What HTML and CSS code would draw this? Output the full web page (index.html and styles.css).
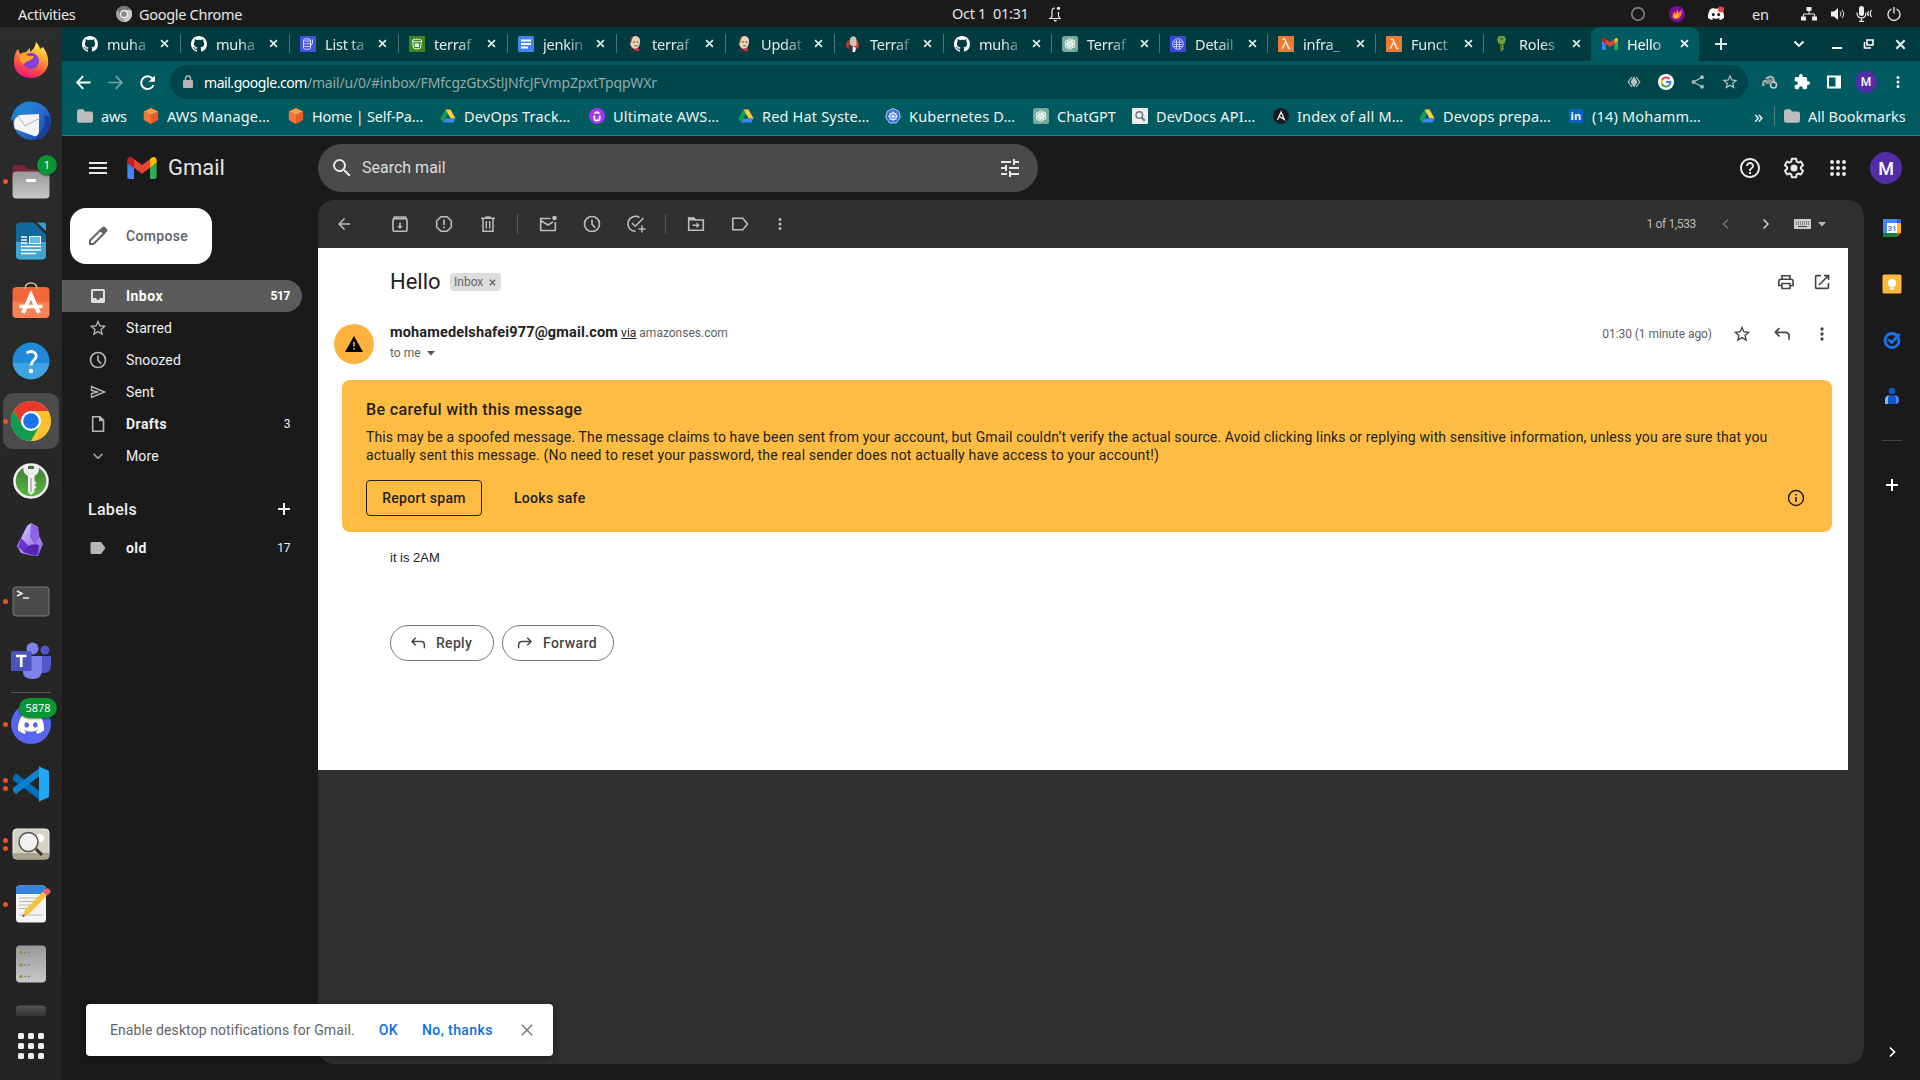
FILE: index.html
```html
<!DOCTYPE html>
<html lang="en">
<head>
<meta charset="utf-8">
<title>Hello - Gmail</title>
<link rel="stylesheet" href="styles.css">
</head>
<body>
<svg class="defs" width="0" height="0">
  <defs>
    <linearGradient id="g-fire" x1="0.7" y1="0" x2="0.3" y2="1"><stop offset="0" stop-color="#fff44f"/><stop offset=".4" stop-color="#ff9a2e"/><stop offset=".75" stop-color="#ff3f4e"/><stop offset="1" stop-color="#e31587"/></linearGradient>
    <linearGradient id="g-blue" x1="0" y1="0" x2="1" y2="1"><stop offset="0" stop-color="#2b9be8"/><stop offset="1" stop-color="#1f3fae"/></linearGradient>
    <linearGradient id="g-grey" x1="0" y1="0" x2="0" y2="1"><stop offset="0" stop-color="#999"/><stop offset="1" stop-color="#c8c8c8"/></linearGradient>
    <linearGradient id="g-orange" x1="0" y1="0" x2="0" y2="1"><stop offset=".5" stop-color="#f4673a"/><stop offset=".5" stop-color="#f88257"/></linearGradient>
    <linearGradient id="g-help" x1="0" y1="0" x2="0" y2="1"><stop offset=".55" stop-color="#2088d8"/><stop offset=".55" stop-color="#40a3e3"/></linearGradient>
    <linearGradient id="g-obs" x1="0" y1="0" x2="1" y2="1"><stop offset="0" stop-color="#dccbff"/><stop offset="1" stop-color="#8a5ff0"/></linearGradient>
    <linearGradient id="g-key" x1="0" y1="0" x2="0" y2="1"><stop offset="0" stop-color="#3c7d33"/><stop offset="1" stop-color="#5cb843"/></linearGradient>
    <linearGradient id="g-fade" x1="0" y1="0" x2="0" y2="1"><stop offset="0" stop-color="#555"/><stop offset="1" stop-color="#333"/></linearGradient>
    <symbol id="github" viewBox="0 0 16 16"><path fill="#fff" d="M8 0C3.58 0 0 3.58 0 8c0 3.54 2.29 6.53 5.47 7.59.4.07.55-.17.55-.38 0-.19-.01-.82-.01-1.49-2.01.37-2.53-.49-2.69-.94-.09-.23-.48-.94-.82-1.13-.28-.15-.68-.52-.01-.53.63-.01 1.08.58 1.23.82.72 1.21 1.87.87 2.33.66.07-.52.28-.87.51-1.07-1.78-.2-3.64-.89-3.64-3.95 0-.87.31-1.59.82-2.15-.08-.2-.36-1.02.08-2.12 0 0 .67-.21 2.2.82.64-.18 1.32-.27 2-.27s1.36.09 2 .27c1.53-1.04 2.2-.82 2.2-.82.44 1.1.16 1.92.08 2.12.51.56.82 1.27.82 2.15 0 3.07-1.87 3.75-3.65 3.95.29.25.54.73.54 1.48 0 1.07-.01 1.93-.01 2.2 0 .21.15.46.55.38A8.01 8.01 0 0 0 16 8c0-4.42-3.58-8-8-8z"/></symbol>
    <symbol id="dynamo" viewBox="0 0 16 16"><path fill="#4455dd" d="M0 0h16v16H0z"/><path fill="none" stroke="#e4e6ff" stroke-width=".9" d="M3.5 4v8c0 1.800 7 1.800 7 0V4M3.500 4c0-1.600 7-1.600 7 0s-7 1.600-7 0M3.500 6.700c0 1.600 7 1.600 7 0M3.500 9.400c0 1.600 7 1.600 7 0M12.500 3.500v3.500l-2 3"/></symbol>
    <symbol id="s3" viewBox="0 0 16 16"><path fill="#3f8624" d="M0 0h16v16H0z"/><path fill="none" stroke="#e9f7e2" stroke-width="1" d="M3.500 4.500l1 7.500c1.500 1.200 5.500 1.200 7 0l1-7.500M3.500 4.500c0-1.800 9-1.800 9 0s-9 1.800-9 0"/><path fill="#e9f7e2" d="M5.500 7.500h4.500v3.500H6z"/></symbol>
    <symbol id="gdoc" viewBox="0 0 16 16"><rect width="16" height="16" rx="1.500" fill="#4285f4"/><path stroke="#fff" stroke-width="2" d="M3 4.500h10M3 8h10M3 11.500h7"/></symbol>
    <symbol id="jenkins" viewBox="0 0 16 16"><path fill="#30333b" d="M2 16c0-4 2.500-6 5-6s6 2 6.500 6z"/><path fill="#efd2b2" d="M3 6c0-4 2-6 5-6s5.500 2 5 6c-.4 4-2 7-4.500 7S3 10.500 3 6z"/><path fill="#55402f" d="M3 6C2 2 5-.5 8 0 5 1 4.500 4 4 8z"/><path stroke="#333" d="M6 6h1.800M9.500 6h1.800"/><path stroke="#8a5b4b" d="M7 9.800h3.500"/><path fill="#d33833" d="M7 13l4-1.200 1.500 3H8.500z"/></symbol>
    <symbol id="redhat" viewBox="0 0 16 16"><path fill="#c33" d="M1 9c0-4 4-6 7-6s6 2 6 6-2 4-6 4-7 0-7-4z"/><path fill="#cfc3b8" d="M5 4c0-5 6.500-5 6.500 0v6H5z"/><path fill="#393c44" d="M3.500 8l4 2v5l-4-3z"/><path fill="#fff" d="M8 10l3 2-1 4H7.500z"/></symbol>
    <symbol id="gpt" viewBox="0 0 16 16"><rect width="16" height="16" rx="2.500" fill="#74aa9c"/><g fill="none" stroke="#fff" stroke-width=".9"><path id="kn" d="M5.400 9.300V5.200a2.400 2.400 0 0 1 4.400-1.300M7 7.300l3.600-2"/><use href="#kn" transform="rotate(60 8 8)"/><use href="#kn" transform="rotate(120 8 8)"/><use href="#kn" transform="rotate(180 8 8)"/><use href="#kn" transform="rotate(240 8 8)"/><use href="#kn" transform="rotate(300 8 8)"/></g></symbol>
    <symbol id="aws" viewBox="0 0 16 16"><path fill="#3d48d8" d="M0 0h16v16H0z"/><g fill="none" stroke="#dfe1ff" stroke-width=".8"><circle cx="8" cy="8" r="5.300"/><path d="M4 6h8M4 8.500h8M6.500 4v9M9.500 4v9M4 10.500h8"/></g></symbol>
    <symbol id="lambda" viewBox="0 0 16 16"><path fill="#ed7a30" d="M0 0h16v16H0z"/><path fill="none" stroke="#ffe9d8" stroke-width="1.500" d="M4.500 3.200h2.300l4 9.200h1.700M7.400 6.500l-3.200 6.200"/></symbol>
    <symbol id="key" viewBox="0 0 16 16"><path fill="#759c3e" d="M3 3l2-3h5l2 3-1 4-2 1v1l1 1-1 1.500 1 1-2.500 3.500L6 14V8L4 7z"/><path fill="#3f6b2b" d="M7 8h1v7.500L6 14V8zM6.500 2h2.500v2H6.500z"/></symbol>
    <symbol id="gmail" viewBox="52 42 88 66"><path fill="#4285f4" d="M58 108h14V74L52 59v43c0 3.320 2.690 6 6 6"/><path fill="#34a853" d="M120 108h14c3.320 0 6-2.690 6-6V59l-20 15"/><path fill="#fbbc04" d="M120 48v26l20-15v-8c0-7.420-8.470-11.650-14.400-7.200"/><path fill="#ea4335" d="M72 74V48l24 18 24-18v26L96 92"/><path fill="#c5221f" d="M52 51v8l20 15V48l-5.600-4.200c-5.940-4.450-14.400-.22-14.400 7.200"/></symbol>
    <symbol id="x" viewBox="0 0 10 10"><path stroke="currentColor" stroke-width="1.900" d="M1.200 1.200l7.600 7.600M8.800 1.200L1.200 8.800"/></symbol>
    <symbol id="folder" viewBox="0 0 14 14"><path fill="#bdbdbd" d="M0 3q0-2 2-2h3.500l1.500 2H12q2 0 2 2v6q0 2-2 2H2q-2 0-2-2z"/></symbol>
    <symbol id="cube" viewBox="0 0 16 16"><path fill="#ff9a45" d="M8 0l7.200 3.500L8 7 .8 3.500z"/><path fill="#f7763a" d="M.8 3.500L8 7v9L.8 12z"/><path fill="#e8592b" d="M15.200 3.500L8 7v9l7.200-4z"/></symbol>
    <symbol id="drive" viewBox="0 0 16 16"><path fill="#0f9d58" d="M5.500 1.500L8 6 3 14.500.3 10.500z"/><path fill="#ffcd40" d="M5.500 1.500h5l5.200 9h-5z"/><path fill="#4285f4" d="M3 14.500l2.500-4h10.200l-2.500 4z"/></symbol>
    <symbol id="udemy" viewBox="0 0 16 16"><circle cx="8" cy="8" r="8" fill="#a435f0"/><path fill="none" stroke="#fff" stroke-width="1.800" d="M5.300 7.500v2.500a2.700 2.700 0 0 0 5.400 0V7.500M5.500 5.500L8 4l2.500 1.500"/></symbol>
    <symbol id="k8s" viewBox="0 0 16 16"><path fill="#326ce5" stroke="#fff" stroke-width=".7" d="M8 .5l5.800 2.800 1.500 6.300-4 5.400H4.700l-4-5.400 1.500-6.300z"/><circle cx="8" cy="8.300" r="3.600" fill="none" stroke="#fff"/><path stroke="#fff" stroke-width=".8" d="M8 3v10.500M3 8.300h10M4.500 4.800l7 7M11.500 4.800l-7 7"/></symbol>
    <symbol id="devdocs" viewBox="0 0 16 16"><rect width="16" height="16" rx="1" fill="#eee"/><circle cx="7.300" cy="7" r="3.300" fill="none" stroke="#777" stroke-width="1.500"/><path stroke="#777" stroke-width="2" d="M9.800 9.800l3 3"/></symbol>
    <symbol id="ansible" viewBox="0 0 16 16"><circle cx="8" cy="8" r="8" fill="#1a1a22"/><path fill="none" stroke="#fff" stroke-width="1.200" d="M4.500 12L8 4l3.300 7.500L6.500 8.500"/></symbol>
    <symbol id="dots" viewBox="0 0 24 24"><path fill="currentColor" d="M12 8a2 2 0 1 0 0-4 2 2 0 0 0 0 4zm0 2a2 2 0 1 0 0 4 2 2 0 0 0 0-4zm0 6a2 2 0 1 0 0 4 2 2 0 0 0 0-4z"/></symbol>
    <symbol id="star" viewBox="0 0 24 24"><path fill="currentColor" d="M22 9.240l-7.190-.62L12 2 9.190 8.630 2 9.240l5.460 4.730L5.820 21 12 17.270 18.180 21l-1.630-7.030L22 9.240zM12 15.400l-3.760 2.270 1-4.280-3.320-2.880 4.380-.38L12 6.100l1.710 4.040 4.380.38-3.320 2.880 1 4.280L12 15.400z"/></symbol>
    <symbol id="clock" viewBox="0 0 24 24"><g fill="none" stroke="currentColor" stroke-width="2"><circle cx="12" cy="12" r="9"/><path d="M12 6.500V12.500l4 4"/></g></symbol>
    <symbol id="grid" viewBox="0 0 18 18"><g fill="currentColor"><circle cx="3" cy="3" r="2"/><circle cx="9" cy="3" r="2"/><circle cx="15" cy="3" r="2"/><circle cx="3" cy="9" r="2"/><circle cx="9" cy="9" r="2"/><circle cx="15" cy="9" r="2"/><circle cx="3" cy="15" r="2"/><circle cx="9" cy="15" r="2"/><circle cx="15" cy="15" r="2"/></g></symbol>
    <symbol id="back" viewBox="0 0 24 24"><path fill="currentColor" d="M20 11H7.830l5.590-5.590L12 4l-8 8 8 8 1.410-1.410L7.830 13H20v-2z"/></symbol>
    <symbol id="reply" viewBox="0 0 24 24"><path fill="none" stroke="currentColor" stroke-width="2" d="M9 5L4 10l5 5M4.500 10H16q4.500 0 4.500 4.500V19"/></symbol>
    <symbol id="plus" viewBox="0 0 14 14"><path stroke="currentColor" stroke-width="2" d="M7 1v12M1 7h12"/></symbol>
    <symbol id="discord" viewBox="0 0 24 24"><path fill="#fff" d="M20.317 4.370a19.790 19.790 0 0 0-4.885-1.515.074.074 0 0 0-.079.037c-.21.375-.444.864-.608 1.250a18.270 18.270 0 0 0-5.487 0 12.640 12.640 0 0 0-.617-1.250.077.077 0 0 0-.079-.037A19.736 19.736 0 0 0 3.677 4.370a.07.07 0 0 0-.032.027C.533 9.046-.32 13.580.099 18.057a.082.082 0 0 0 .031.057 19.900 19.900 0 0 0 5.993 3.030.078.078 0 0 0 .084-.028 14.090 14.090 0 0 0 1.226-1.994.076.076 0 0 0-.041-.106 13.107 13.107 0 0 1-1.872-.892.077.077 0 0 1-.008-.128 10.200 10.200 0 0 0 .372-.292.074.074 0 0 1 .077-.010c3.928 1.793 8.180 1.793 12.062 0a.074.074 0 0 1 .078.010c.12.098.246.198.373.292a.077.077 0 0 1-.006.127 12.299 12.299 0 0 1-1.873.892.077.077 0 0 0-.041.107c.36.698.772 1.362 1.225 1.993a.076.076 0 0 0 .084.028 19.839 19.839 0 0 0 6.002-3.030.077.077 0 0 0 .032-.054c.5-5.177-.838-9.674-3.549-13.660a.061.061 0 0 0-.031-.030zM8.020 15.330c-1.183 0-2.157-1.085-2.157-2.419 0-1.333.956-2.419 2.157-2.419 1.210 0 2.176 1.096 2.157 2.420 0 1.333-.956 2.418-2.157 2.418zm7.975 0c-1.183 0-2.157-1.085-2.157-2.419 0-1.333.955-2.419 2.157-2.419 1.210 0 2.176 1.096 2.157 2.420 0 1.333-.946 2.418-2.157 2.418z"/></symbol>
  </defs>
</svg>

<header class="topbar">
  <div class="tb-left">
    <span class="t-act">Activities</span>
    <svg class="t-app" width="16" height="16" viewBox="0 0 16 16"><circle cx="8" cy="8" r="8" fill="#a5a5a5"/><path fill="#777" d="M8 4h7A8 8 0 0 0 1.500 3.500L4.500 9z"/><path fill="#ccc" d="M8 16a8 8 0 0 0 7-12H9z"/><circle cx="8" cy="8" r="3.500" fill="#888" stroke="#f2f2f2" stroke-width="1.300"/></svg>
    <span>Google Chrome</span>
  </div>
  <div class="tb-mid"><span>Oct 1&nbsp; 01:31</span>
    <svg width="14" height="16" viewBox="0 0 14 16"><path fill="none" stroke="#eee" stroke-width="1.200" d="M1 12.500h12M3 12l1-2V5.500Q4 2 7 2M10.500 6v4l1 2"/><circle cx="10.500" cy="2.300" r="1.600" fill="#eee"/><path fill="#eee" d="M5.500 14h3.500q-.5 1.500-1.750 1.500T5.500 14z"/></svg>
  </div>
  <div class="tb-right">
    <svg class="r1" width="16" height="16" viewBox="0 0 16 16"><circle cx="8" cy="8" r="6.200" fill="none" stroke="#777" stroke-width="1.900"/></svg>
    <svg class="r2" width="16" height="16" viewBox="0 0 16 16"><circle cx="8" cy="8" r="8" fill="#7d0b9c"/><path fill="#ff7a2a" d="M3.500 11q0-4 2.500-6v3l3-5v4l4-3q0 8-5 9-4 .5-4.500-2z"/><path fill="#ffd23a" d="M5 11q1-3 2-3v1.500L9 7q1 4-2 5z"/></svg>
    <svg class="r3" width="16" height="16" viewBox="0 0 16 16"><use href="#discord" width="16" height="16"/><circle cx="13" cy="3.500" r="3" fill="#e5484d"/></svg>
    <span class="r4">en</span>
    <svg class="r5" width="16" height="14" viewBox="0 0 16 14"><path fill="#eee" d="M5.500 0h5v4h-5zM0 9.500h5v4H0zM11 9.500h5v4h-5z"/><path fill="none" stroke="#eee" d="M8 4v3M2.500 10V7h11v3"/></svg>
    <svg class="r6" width="16" height="16" viewBox="0 0 16 16"><path fill="#eee" d="M1 5.500h3L8 2v12l-4-3.500H1z"/><path fill="none" stroke="#ddd" d="M10 5.500q2 2.500 0 5M12 4q3.300 4 0 8"/></svg>
    <svg class="r7" width="17" height="16" viewBox="0 0 17 16"><rect x="3" y="0" width="5" height="10" rx="2.500" fill="#eee"/><path fill="none" stroke="#eee" stroke-width="1.200" d="M1 6.500Q1 12 5.500 12T10 6.500M5.500 12v3.500M3 15.300h5M12.500 5q-1.500 2.500 0 5M15.500 4q-2.500 3.500 0 7"/></svg>
    <svg class="r8" width="14" height="14" viewBox="0 0 14 14"><path fill="none" stroke="#eee" stroke-width="1.300" d="M4.500 2A6 6 0 1 0 9.500 2M7 0v6.500"/></svg>
  </div>
</header>

<div class="desktop">
  <nav class="dock">
    <div class="app"><svg viewBox="0 0 40 40"><path fill="url(#g-fire)" d="M3 22C3 15 4 12 7 8l2 5q3-2 6-2l4-4v4c3-2 5-5 6-10 3 3 4 6 4 7l3-2c4 6 6 11 5 18-1.500 7-8 13-17 13S3 31 3 22z"/><circle cx="20" cy="20" r="8" fill="#8040d8"/><path fill="#ff9f2c" d="M8 14q6-3 9 1h6q-1 4-6 5-3 1-4 3-5-2-5-9z"/></svg></div>
    <div class="app"><svg viewBox="0 0 40 40"><circle cx="21" cy="20" r="19" fill="url(#g-blue)"/><path fill="#1f7fd0" d="M0 20Q1 6 14 1q8-2 14 3-10 1-13 9L5 17z"/><path fill="#1c3f9c" d="M33 14q4 12-8 22l4 3q12-7 10-23z"/><path fill="#f3f3f5" d="M4 18l4-4 20-1v18q-1 5-5 4L4 28q-2-5 0-10z"/><path fill="none" stroke="#aaa" stroke-width=".9" d="M7 15l7 10 15-8"/></svg></div>
    <div class="app"><i class="dot"></i><svg viewBox="0 0 40 40"><path fill="#7d2438" d="M1.500 8q0-4 4-4H13l4 4h17q4 0 4 4v8H1.500z"/><rect x="1.500" y="10.500" width="37" height="27" rx="4" fill="url(#g-grey)"/><rect x="15" y="18" width="10" height="3" rx="1" fill="#fff"/></svg><b class="badge one">1</b></div>
    <div class="app"><svg viewBox="0 0 40 40"><path fill="#106a9b" d="M9 1.500h14L35 14v20q0 4.500-4 4.500H9q-4 0-4-4V5.500q0-4 4-4z"/><path fill="#3fa4d2" d="M5 21h30v13q0 4.500-4 4.500H9q-4 0-4-4z"/><path fill="#2d9fd0" d="M26 1.500h7q2 0 2 2V10z"/><path stroke="#fff" stroke-width="1.600" d="M10 16h6M10 19h6M10 22h6M10 25.500h20M10 29h20M10 32.500h15"/><rect x="18.500" y="15.500" width="11" height="7" fill="#5bc0f0" stroke="#fff"/></svg></div>
    <div class="app"><svg viewBox="0 0 40 40"><rect x="1.500" y="6" width="37" height="31" rx="4" fill="url(#g-orange)"/><path fill="none" stroke="#d7b98d" stroke-width="1.500" d="M14 8q0-6 6-6t6 6"/><path fill="none" stroke="#fff" stroke-width="4" d="M12 32l8-18 8 18"/><path stroke="#fff" stroke-width="3.500" d="M8.500 25.500h23"/></svg></div>
    <div class="app"><svg viewBox="0 0 40 40"><circle cx="20" cy="20" r="18.500" fill="url(#g-help)"/><path fill="none" stroke="#fff" stroke-width="2.800" d="M15.500 12q5-3 8.500 0 3 4-1.500 7.500-2.500 2-2.500 5"/><circle cx="20" cy="30" r="2.200" fill="#fff"/></svg></div>
    <div class="app on"><i class="dot"></i><svg viewBox="0 0 40 40"><circle cx="20" cy="20" r="20" fill="#fbc02d"/><path fill="#e33b2e" d="M20 10h17.300A20 20 0 0 0 2.700 10l8.700 15z"/><path fill="#0f9d50" d="M2.700 10A20 20 0 0 0 20 40l8.600-15-17.200 0z"/><path fill="#fbc02d" d="M20 40l8.700-15Q31 20 28.700 15L37 10A20 20 0 0 1 20 40z"/><path fill="#fbc02d" d="M20 10h17.300l-6 10z"/><circle cx="20" cy="20" r="10" fill="#fff"/><circle cx="20" cy="20" r="7.800" fill="#1a73e8"/></svg></div>
    <div class="app"><svg viewBox="0 0 40 40"><circle cx="20" cy="20" r="16.500" fill="url(#g-key)" stroke="#f0f0f0" stroke-width="2.500"/><path fill="#f0f0f0" d="M12.500 5h15q2 7-4 10v5l2 2-2 2 2 2-2 2v3l-3.500 3-3-3V15q-6-3-4.500-10z"/><path fill="#397832" d="M17 5h6v3h-6z"/><path stroke="#999" stroke-width="1.200" d="M20 17v14"/></svg></div>
    <div class="app"><svg viewBox="0 0 40 40"><path fill="url(#g-obs)" d="M16 5l4-3 7 4 1 9 4 8-5 12-5 0-12-3-4-7 4-8z"/><path fill="#6a35cf" d="M10 17l7 7-3 8-7-6z"/><path fill="#8d63ea" d="M20 2l7 5 1 9-4 8-5-8z"/><path fill="#5426ad" d="M12 31q5-10 16-7l-1 9-3 2z"/></svg></div>
    <div class="app"><i class="dot"></i><svg viewBox="0 0 40 40"><rect x="2" y="6" width="36" height="29" rx="3" fill="#4a4a4a" stroke="#777"/><path fill="none" stroke="#eee" stroke-width="1.500" d="M6 10l5 2.500L6 15M12 17h6"/></svg></div>
    <div class="app"><svg viewBox="0 0 40 40"><circle cx="34" cy="9" r="4.500" fill="#5059c9"/><circle cx="21.500" cy="7.500" r="6" fill="#7b83eb"/><path fill="#5059c9" d="M28 15h12v9q0 7-6 8h-6z"/><path fill="#7b83eb" d="M12 15h19v14q0 9-9.500 9T12 31z"/><rect x="0" y="10" width="20.500" height="20" rx="1.500" fill="#4b53bc"/><path stroke="#fff" stroke-width="2.600" d="M5 15h10.500M10.200 15v11"/></svg></div>
    <div class="dock-sep"></div>
    <div class="app"><i class="dot"></i><svg viewBox="0 0 40 40"><circle cx="20" cy="20" r="20" fill="#5865f2"/><use href="#discord" x="7" y="7" width="26" height="26"/></svg><b class="badge">5878</b></div>
    <div class="app"><i class="dot two"></i><svg viewBox="0 0 40 40"><path fill="#0070b8" d="M2 13l3-3.500L30 28v9L2 16z"/><path fill="#0a84cf" d="M2 27l3 3L30 11V3L2 24z"/><path fill="#23a7f2" d="M28 2.500l10 4.500v26l-10 4.500z"/></svg></div>
    <div class="app"><i class="dot two"></i><svg viewBox="0 0 40 40"><rect x="2" y="5" width="36" height="30" rx="3.500" fill="#d6d2c6" stroke="#eee"/><path fill="#a9a38f" d="M2 29h36v3q0 3-3 3H5q-3 0-3-3z"/><circle cx="29" cy="14" r="4" fill="#fff"/><circle cx="17.500" cy="18" r="9.500" fill="#f2f2f0" stroke="#555" stroke-width="1.500"/><path stroke="#333" stroke-width="3" d="M25 25l6 6"/></svg></div>
    <div class="app"><i class="dot"></i><svg viewBox="0 0 40 40"><rect x="5" y="1.500" width="30" height="37" rx="3.500" fill="#f4f4f4"/><path fill="#3584e4" d="M5 10V5q0-3.500 3.500-3.500h23Q35 1.500 35 5v5z"/><path stroke="#bbb5a8" stroke-width="1.200" d="M8 14h20M8 17.500h17M8 21h14M8 24.500h12M8 31h24"/><path fill="#f8c33c" d="M14 26L32 7.500l4 4L18 30l-6 2.500z"/><path fill="#ee5f6b" d="M33 6q3-3 5.500-.5T38 10l-2 1.500L31.500 7z"/><path fill="#333" d="M12.500 30.500l-1 2.500 2.500-1z"/></svg></div>
    <div class="app"><svg viewBox="0 0 40 40"><rect x="5" y="1.500" width="30" height="37" rx="4" fill="url(#g-grey)"/><g fill="#78a93c"><circle cx="10" cy="8.500" r="1.800"/><circle cx="10" cy="21" r="1.800"/><circle cx="10" cy="32.500" r="1.800"/></g><path stroke="#777" stroke-width="1.600" stroke-dasharray="1.600 1.800" d="M13.500 8.500h5M13.500 21h5M13.500 32.500h5"/></svg></div>
    <div class="cut"><svg viewBox="0 0 40 11"><path fill="url(#g-fade)" d="M5 11V4q0-3.500 3.500-3.500h23Q35 .500 35 4v7z"/></svg></div>
    <div class="all"><svg viewBox="0 0 26 26"><g fill="#eee"><rect width="6" height="6" rx="1.500"/><rect x="10" width="6" height="6" rx="1.500"/><rect x="20" width="6" height="6" rx="1.500"/><rect y="10" width="6" height="6" rx="1.500"/><rect x="10" y="10" width="6" height="6" rx="1.500"/><rect x="20" y="10" width="6" height="6" rx="1.500"/><rect y="20" width="6" height="6" rx="1.500"/><rect x="10" y="20" width="6" height="6" rx="1.500"/><rect x="20" y="20" width="6" height="6" rx="1.500"/></g></svg></div>
  </nav>

  <div class="browser">
    <div class="tabs">
      <div class="tab wide"><svg class="fav"><use href="#github"/></svg><span>muha</span><svg class="close"><use href="#x"/></svg></div>
      <div class="tab wide"><svg class="fav"><use href="#github"/></svg><span>muha</span><svg class="close"><use href="#x"/></svg></div>
      <div class="tab wide"><svg class="fav"><use href="#dynamo"/></svg><span>List ta</span><svg class="close"><use href="#x"/></svg></div>
      <div class="tab wide"><svg class="fav"><use href="#s3"/></svg><span>terraf</span><svg class="close"><use href="#x"/></svg></div>
      <div class="tab wide"><svg class="fav"><use href="#gdoc"/></svg><span>jenkin</span><svg class="close"><use href="#x"/></svg></div>
      <div class="tab wide"><svg class="fav"><use href="#jenkins"/></svg><span>terraf</span><svg class="close"><use href="#x"/></svg></div>
      <div class="tab wide"><svg class="fav"><use href="#jenkins"/></svg><span>Updat</span><svg class="close"><use href="#x"/></svg></div>
      <div class="tab wide"><svg class="fav"><use href="#redhat"/></svg><span>Terraf</span><svg class="close"><use href="#x"/></svg></div>
      <div class="tab"><svg class="fav"><use href="#github"/></svg><span>muha</span><svg class="close"><use href="#x"/></svg></div>
      <div class="tab"><svg class="fav"><use href="#gpt"/></svg><span>Terraf</span><svg class="close"><use href="#x"/></svg></div>
      <div class="tab"><svg class="fav"><use href="#aws"/></svg><span>Detail</span><svg class="close"><use href="#x"/></svg></div>
      <div class="tab"><svg class="fav"><use href="#lambda"/></svg><span>infra_</span><svg class="close"><use href="#x"/></svg></div>
      <div class="tab"><svg class="fav"><use href="#lambda"/></svg><span>Funct</span><svg class="close"><use href="#x"/></svg></div>
      <div class="tab last"><svg class="fav"><use href="#key"/></svg><span>Roles</span><svg class="close"><use href="#x"/></svg></div>
      <div class="tab active"><svg class="fav"><use href="#gmail"/></svg><span>Hello</span><svg class="close"><use href="#x"/></svg></div>
      <svg class="newtab"><use href="#plus"/></svg>
      <div class="winctl">
        <svg width="12" height="8" viewBox="0 0 12 8"><path fill="none" stroke="#fff" stroke-width="1.800" d="M1.500 1.500L6 6l4.500-4.500"/></svg>
        <svg width="12" height="10" viewBox="0 0 12 10"><path fill="#fff" d="M1 8h10v2H1z"/></svg>
        <svg width="12" height="10" viewBox="0 0 12 10"><path fill="none" stroke="#fff" stroke-width="1.600" d="M4 1h6v5H4zM1.500 3v6H8"/></svg>
        <svg width="11" height="11"><use href="#x"/></svg>
      </div>
    </div>
    <div class="toolbar">
      <svg class="nav" viewBox="0 0 24 24"><path fill="none" stroke="#fff" stroke-width="2.600" d="M22 12H3M11.500 3L3 12l8.500 9"/></svg>
      <svg class="nav dim" viewBox="0 0 24 24"><path fill="none" stroke="#fff" stroke-width="2.300" d="M2 12h19M12.500 3l8.500 9-8.500 9"/></svg>
      <svg class="nav" viewBox="0 0 24 24"><path fill="none" stroke="#fff" stroke-width="2.700" d="M20.500 15.500A9 9 0 1 1 19 6.500l1 1.500"/><path fill="#fff" d="M22.500 2v9h-9z"/></svg>
      <div class="url">
        <svg width="10" height="14" viewBox="0 0 10 14"><rect x="0" y="5" width="10" height="8" rx="1" fill="#b5b5b5"/><path fill="none" stroke="#b5b5b5" stroke-width="1.500" d="M2.500 5.500V3.500a2.500 2.500 0 0 1 5 0v2"/></svg>
        <span class="addr"><em>mail.google.com</em>/mail/u/0/#inbox/FMfcgzGtxStlJNfcJFVmpZpxtTpqpWXr</span>
        <div class="urlicons">
          <svg viewBox="0 0 16 16"><path fill="#b9c4c5" d="M8 2.500l3.500 5.500L8 13.500 4.500 8z"/><path fill="none" stroke="#b9c4c5" stroke-width="1.200" d="M6 3L2.200 8 6 13M10 3l3.800 5L10 13"/></svg>
          <svg viewBox="0 0 16 16"><circle cx="8" cy="8" r="8" fill="#fff"/><g fill="none" stroke-width="2"><path stroke="#ea4335" d="M4 6A4.500 4.500 0 0 1 11.500 5"/><path stroke="#fbbc04" d="M4 6a4.500 4.500 0 0 0 0 4"/><path stroke="#34a853" d="M4 10a4.500 4.500 0 0 0 7 1.500"/><path stroke="#4285f4" d="M8 8h4.500q0 2-1.500 3.500"/></g></svg>
          <svg viewBox="0 0 16 16"><g fill="#a9b7b8"><circle cx="12" cy="3.200" r="2"/><circle cx="12" cy="12.800" r="2"/><circle cx="3.500" cy="8" r="2"/></g><path fill="none" stroke="#a9b7b8" stroke-width="1.300" d="M12 3.200L3.500 8l8.500 4.800"/></svg>
          <svg class="ustar"><use href="#star"/></svg>
        </div>
      </div>
      <div class="exts">
        <svg viewBox="0 0 16 16"><path fill="none" stroke="#a5adae" stroke-width="2.400" d="M1.500 12q-1-6 3-5l1 3M4 5q4-4 7-1l1 4"/><circle cx="11.500" cy="11" r="3" fill="none" stroke="#ccc" stroke-width="1.600"/><circle cx="7.500" cy="7.500" r="2.500" fill="#8d9495"/></svg>
        <svg viewBox="1 1 22 22"><path fill="#fff" d="M20.500 11H19V7c0-1.100-.9-2-2-2h-4V3.500a2.500 2.500 0 0 0-5 0V5H4c-1.100 0-1.990.9-1.990 2v3.800H3.500c1.490 0 2.700 1.210 2.700 2.700s-1.210 2.700-2.700 2.700H2V20c0 1.100.9 2 2 2h3.800v-1.500c0-1.490 1.210-2.700 2.700-2.700 1.490 0 2.700 1.210 2.700 2.700V22H17c1.100 0 2-.9 2-2v-4h1.500a2.500 2.500 0 0 0 0-5z"/></svg>
        <svg viewBox="0 0 16 16"><path fill="#fff" fill-rule="evenodd" d="M1 1.500h14v13H1zM3 3.500v9h6.500v-9z"/></svg>
        <b class="me">M</b>
        <svg class="kebab"><use href="#dots"/></svg>
      </div>
    </div>
    <div class="bookmarks">
      <div class="bm tight"><svg><use href="#folder"/></svg><span>aws</span></div>
      <div class="bm"><svg><use href="#cube"/></svg><span>AWS Manage…</span></div>
      <div class="bm tight"><svg><use href="#cube"/></svg><span>Home | Self-Pa…</span></div>
      <div class="bm"><svg><use href="#drive"/></svg><span>DevOps Track…</span></div>
      <div class="bm"><svg><use href="#udemy"/></svg><span>Ultimate AWS…</span></div>
      <div class="bm"><svg><use href="#drive"/></svg><span>Red Hat Syste…</span></div>
      <div class="bm"><svg><use href="#k8s"/></svg><span>Kubernetes D…</span></div>
      <div class="bm mid"><svg><use href="#gpt"/></svg><span>ChatGPT</span></div>
      <div class="bm"><svg><use href="#devdocs"/></svg><span>DevDocs API…</span></div>
      <div class="bm"><svg><use href="#ansible"/></svg><span>Index of all M…</span></div>
      <div class="bm"><svg><use href="#drive"/></svg><span>Devops prepa…</span></div>
      <div class="bm"><b class="li">in</b><span>(14) Mohamm…</span></div>
      <div class="bm-more">»</div>
      <div class="bm mid all-bm"><svg><use href="#folder"/></svg><span>All Bookmarks</span></div>
    </div>

    <div class="gmail">
      <div class="ghead">
        <svg class="burger" width="18" height="12" viewBox="0 0 18 12"><path fill="#e8e8e8" d="M0 0h18v2H0zM0 5h18v2H0zM0 10h18v2H0z"/></svg>
        <svg class="glogo" width="30" height="22"><use href="#gmail"/></svg>
        <span class="gname">Gmail</span>
        <div class="search">
          <svg width="24" height="24" viewBox="0 0 24 24"><path fill="#e8e8e8" d="M15.500 14h-.79l-.28-.27A6.471 6.471 0 0 0 16 9.500 6.500 6.500 0 1 0 9.500 16c1.610 0 3.090-.59 4.230-1.570l.27.28v.79l5 4.990L20.490 19l-4.990-5zm-6 0C7.010 14 5 11.990 5 9.500S7.010 5 9.500 5 14 7.010 14 9.500 11.990 14 9.500 14z"/></svg>
          <span>Search mail</span>
          <svg class="tune" width="24" height="24" viewBox="0 0 24 24"><path fill="#e8e8e8" d="M3 17v2h6v-2H3zM3 5v2h10V5H3zm10 16v-2h8v-2h-8v-2h-2v6h2zM7 9v2H3v2h4v2h2V9H7zm14 4v-2H11v2h10zm-6-4h2V7h4V5h-4V3h-2v6z"/></svg>
        </div>
        <div class="hicons">
          <svg viewBox="0 0 24 24"><path fill="#e8e8e8" d="M11 18h2v-2h-2v2zm1-16C6.480 2 2 6.480 2 12s4.480 10 10 10 10-4.480 10-10S17.520 2 12 2zm0 18c-4.410 0-8-3.590-8-8s3.590-8 8-8 8 3.590 8 8-3.590 8-8 8zm0-14c-2.210 0-4 1.790-4 4h2c0-1.100.9-2 2-2s2 .9 2 2c0 2-3 1.750-3 5h2c0-2.250 3-2.500 3-5 0-2.210-1.790-4-4-4z"/></svg>
          <svg viewBox="0 0 24 24"><path fill="#e8e8e8" d="M13.850 22.250h-3.700c-.74 0-1.360-.54-1.450-1.270l-.27-1.890c-.27-.14-.53-.29-.79-.46l-1.800.72c-.7.26-1.470-.03-1.810-.65L2.200 15.530c-.35-.66-.2-1.440.36-1.880l1.530-1.190c-.01-.15-.02-.3-.02-.46 0-.15.01-.31.02-.46l-1.520-1.190c-.59-.45-.74-1.260-.37-1.880l1.850-3.190c.34-.62 1.110-.9 1.790-.63l1.810.73c.26-.17.52-.32.78-.46l.27-1.910c.09-.7.71-1.250 1.440-1.250h3.700c.74 0 1.360.54 1.450 1.270l.27 1.890c.27.14.53.29.79.46l1.800-.72c.71-.26 1.480.03 1.820.65l1.840 3.180c.36.66.2 1.440-.36 1.880l-1.520 1.190c.01.15.02.3.02.46s-.01.31-.02.46l1.520 1.190c.56.45.72 1.230.37 1.860l-1.860 3.220c-.34.62-1.110.9-1.800.63l-1.800-.72c-.26.17-.52.32-.78.46l-.27 1.910c-.1.68-.72 1.220-1.460 1.220zm-3.230-2h2.760l.37-2.550.53-.22c.44-.18.88-.44 1.340-.78l.45-.34 2.380.96 1.380-2.400-2.030-1.580.07-.56c.03-.26.06-.51.06-.78s-.03-.53-.06-.78l-.07-.56 2.030-1.580-1.390-2.400-2.390.96-.45-.35c-.42-.32-.87-.58-1.330-.77l-.52-.22-.37-2.550h-2.760l-.37 2.550-.53.21c-.44.19-.88.44-1.340.79l-.45.33-2.380-.95-1.390 2.390 2.030 1.580-.07.56a7 7 0 0 0-.06.79c0 .26.02.53.06.78l.07.56-2.030 1.580 1.380 2.400 2.390-.96.45.35c.43.33.86.58 1.330.77l.53.22.38 2.550z"/><circle cx="12" cy="12" r="3.500" fill="#e8e8e8"/></svg>
          <svg class="gapps"><use href="#grid"/></svg>
          <b class="avatar-me">M</b>
        </div>
      </div>

      <div class="gbody">
        <aside class="side">
          <div class="compose"><svg width="20" height="20" viewBox="0 0 20 20"><path fill="none" stroke="#5f6368" stroke-width="2" d="M2 18v-3.500L12.500 4 16 7.500 5.500 18z"/><path fill="#5f6368" d="M12.500 3l2-2q1.500-1 3 .5l1 1q1.500 1.500.5 3l-2 2z"/></svg><span>Compose</span></div>
          <div class="row sel"><svg viewBox="0 0 20 20"><path fill="#ddd" fill-rule="evenodd" d="M4.500 3h11Q17 3 17 4.500v11q0 1.500-1.500 1.500h-11Q3 17 3 15.500v-11Q3 3 4.500 3zM5 5v7h3q.5 2 2 2t2-2h3V5z"/></svg><span>Inbox</span><em>517</em></div>
          <div class="row"><svg><use href="#star"/></svg><span>Starred</span></div>
          <div class="row"><svg><use href="#clock"/></svg><span>Snoozed</span></div>
          <div class="row"><svg viewBox="0 0 20 20"><path fill="none" stroke="currentColor" stroke-width="1.400" d="M3.500 4.500L16.500 10l-13 5.500V11.500L10 10 3.500 8.500z"/></svg><span>Sent</span></div>
          <div class="row bold"><svg viewBox="0 0 20 20"><path fill="none" stroke="currentColor" stroke-width="1.600" d="M4.700 2.700h7.300l3.500 3.500V17.300H4.700z"/><path fill="currentColor" d="M11 2.500v4.700h4.700z"/></svg><span>Drafts</span><em class="n">3</em></div>
          <div class="row"><svg viewBox="0 0 20 20"><path fill="none" stroke="currentColor" stroke-width="1.500" d="M5.500 7.800L10 12.200l4.500-4.400"/></svg><span>More</span></div>
          <div class="lhead"><span>Labels</span><svg><use href="#plus"/></svg></div>
          <div class="row bold lab"><svg viewBox="0 0 20 20"><path fill="currentColor" d="M4 4h9l4.500 6L13 16H4q-1.500 0-1.500-1.500v-9Q2.500 4 4 4z"/></svg><span>old</span><em class="n">17</em></div>
        </aside>

        <main class="panel">
          <div class="mbar">
            <svg class="i i0"><use href="#back"/></svg>
            <svg class="i i1" viewBox="0 0 20 20"><path fill="none" stroke="currentColor" stroke-width="1.600" d="M3 6v10q0 1.200 1.200 1.200h11.600Q17 17.200 17 16V6L15.500 3h-11z"/><path fill="currentColor" d="M3 5.500h14V4H3zM9.200 8.500h1.600V12h2L10 15l-2.800-3h2z"/></svg>
            <svg class="i" viewBox="0 0 20 20"><path fill="none" stroke="currentColor" stroke-width="1.500" d="M7 2.700h6L17.300 7v6L13 17.300H7L2.700 13V7z"/><path fill="currentColor" d="M9.200 5.500h1.600v5.500H9.200zM9.200 12.500h1.600v1.700H9.200z"/></svg>
            <svg class="i" viewBox="0 0 20 20"><path fill="none" stroke="currentColor" stroke-width="1.500" d="M5 5v12.200h10V5M3 4.200h14M7.500 3h5M8.300 7v7.500M11.700 7v7.500"/></svg>
            <i class="vs"></i>
            <svg class="i" viewBox="0 0 20 20"><path fill="none" stroke="currentColor" stroke-width="1.600" d="M12.500 4.500H2.700v12h14.600V8M2.700 6.500L10 11l5-3"/><circle cx="16.500" cy="4" r="2.300" fill="currentColor"/></svg>
            <svg class="i"><use href="#clock"/></svg>
            <svg class="i" viewBox="0 0 20 20"><path fill="none" stroke="currentColor" stroke-width="1.500" d="M9.500 17.300A7.500 7.500 0 1 1 13.500 3.500M6 9l3.200 3.200L17.500 4M16 11.500v7M12.500 15h7"/></svg>
            <i class="vs"></i>
            <svg class="i" viewBox="0 0 20 20"><path fill="none" stroke="currentColor" stroke-width="1.600" d="M2.700 16.300V4h5l2 2h7.600v10.300z"/><path fill="currentColor" d="M2.500 3.500H8l2 3H2.500zM6.500 10.400h4V8.200l3.300 3-3.300 3V12h-4z"/></svg>
            <svg class="i" viewBox="0 0 20 20"><path fill="none" stroke="currentColor" stroke-width="1.600" d="M2.800 4.200h10L17.500 10l-4.700 5.800h-10z"/></svg>
            <svg class="i kb"><use href="#dots"/></svg>
            <div class="pager">
              <span>1 of 1,533</span>
              <svg width="20" height="20" viewBox="0 0 20 20"><path fill="none" stroke="#6f6f6f" stroke-width="1.600" d="M12 5.500L7.500 10l4.500 4.500"/></svg>
              <svg width="20" height="20" viewBox="0 0 20 20"><path fill="none" stroke="#ccc" stroke-width="1.600" d="M7.500 5.500L12 10l-4.500 4.500"/></svg>
              <svg width="32" height="12" viewBox="0 0 32 12"><rect y="1" width="17" height="10" fill="#ccc"/><path stroke="#444" stroke-width="1" stroke-dasharray="1 1" d="M2 4h13M2 6h13"/><path stroke="#444" d="M4 8.500h9"/><path fill="#bbb" d="M24 4h8l-4 4.500z"/></svg>
            </div>
          </div>
          <div class="mail">
            <div class="subj"><h1>Hello</h1><span class="chip"><span>Inbox</span><svg><use href="#x"/></svg></span>
              <svg class="print" viewBox="0 0 20 20"><path fill="none" stroke="#444" stroke-width="1.600" d="M6 7V3.800h8V7M6 13.500H2.900V9.500Q2.900 7.200 5 7.200h10q2.100 0 2.100 2.300v4H14M6 11.500h8v5H6z"/></svg>
              <svg viewBox="0 0 20 20"><path fill="none" stroke="#444" stroke-width="1.600" d="M9 3.600H4.600q-1 0-1 1v10.800q0 1 1 1h10.800q1 0 1-1V11M12 3.600h4.600V8M16.500 3.500L7 13"/></svg>
            </div>
            <div class="from">
              <div class="warn"><svg width="18" height="16" viewBox="0 0 18 16"><path d="M9 0l9 16H0z"/><path fill="#ffb33f" d="M8.200 6h1.600v4.500H8.200zM8.200 12h1.600v1.600H8.200z"/></svg></div>
              <div class="who"><p><b>mohamedelshafei977@gmail.com</b> <u>via</u> <span>amazonses.com</span></p><p class="to"><span>to me</span><svg width="8" height="5" viewBox="0 0 8 5"><path fill="#555" d="M0 0h8L4 4.500z"/></svg></p></div>
              <div class="meta"><span>01:30 (1 minute ago)</span><svg><use href="#star"/></svg><svg><use href="#reply"/></svg><svg><use href="#dots"/></svg></div>
            </div>
            <section class="banner">
              <h2>Be careful with this message</h2>
              <p>This may be a spoofed message. The message claims to have been sent from your account, but Gmail couldn’t verify the actual source. Avoid clicking links or replying with sensitive information, unless you are sure that you<br><span class="l2">actually sent this message. (No need to reset your password, the real sender does not actually have access to your account!)</span></p>
              <div class="acts"><button class="spam">Report spam</button><button class="safe">Looks safe</button>
              <svg width="20" height="20" viewBox="0 0 20 20"><circle cx="10" cy="10" r="7.500" fill="none" stroke="#222" stroke-width="1.500"/><path fill="#222" d="M9.200 9h1.600v5H9.200zM9.200 6h1.600v1.600H9.200z"/></svg></div>
            </section>
            <p class="text">it is 2AM</p>
            <div class="replies"><button class="rp"><svg><use href="#reply"/></svg><span>Reply</span></button><button class="fw"><svg><use href="#reply"/></svg><span>Forward</span></button></div>
          </div>
        </main>

        <aside class="rail">
          <svg viewBox="0 0 20 20"><path fill="#4285f4" d="M1 1h14v4H5v10H1z"/><path fill="#1967d2" d="M15 1h4v4h-4z"/><path fill="#fbbc04" d="M15 5h4v10h-4z"/><path fill="#188038" d="M1 15h14v4H1z"/><path fill="#ea4335" d="M15 15h4l-4 4z"/><path fill="#fff" d="M5 5h10v10H5z"/><text x="10" y="13" text-anchor="middle" font-size="8" font-weight="700" font-family="Roboto, sans-serif" fill="#4285f4">31</text></svg>
          <svg viewBox="0 0 20 20"><rect x=".5" y=".5" width="19" height="19" rx="1.500" fill="#fdb93c"/><circle cx="10" cy="9" r="4" fill="#fff"/><path fill="#fff" d="M8 11h4v2.200H8zM8 14h4v1.500H8z"/></svg>
          <svg viewBox="0 0 20 20"><circle cx="10" cy="10.500" r="7" fill="none" stroke="#1a73e8" stroke-width="3"/><path fill="none" stroke="#1a73e8" stroke-width="2.800" d="M6.500 9.500l3.200 3L17.500 4"/></svg>
          <svg viewBox="0 0 20 20"><circle cx="10" cy="5" r="3.300" fill="#0b57d0"/><path fill="#8ab4f8" d="M3 18v-4q0-4.500 4-4.500h1V18z"/><path fill="#4f84e8" d="M12 9.500h1q4 0 4 4.500t-4 4h-1z"/><path fill="#0b57d0" d="M6 18v-5.500q0-3 3-3h2q3 0 3 3V18z"/></svg>
          <hr>
          <svg class="rplus"><use href="#plus"/></svg>
          <svg class="rchev" viewBox="0 0 20 20"><path fill="none" stroke="#fff" stroke-width="1.700" d="M8 5.500l4.500 4.500L8 14.500"/></svg>
        </aside>
      </div>
    </div>
  </div>
</div>

<div class="toast"><span>Enable desktop notifications for Gmail.</span><a class="ok">OK</a><a>No, thanks</a><svg viewBox="0 0 12 12"><path stroke="#777" stroke-width="1.500" d="M.8.8l10.400 10.400M11.200.8L.8 11.200"/></svg></div>
</body>
</html>
```
FILE: styles.css
```css
* { box-sizing: border-box; }
body { margin: 0; width: 1920px; height: 1080px; overflow: hidden; display: flex; flex-direction: column; background: #1a1a1a; color: #fff; font-family: Roboto, "Liberation Sans", sans-serif; font-size: 14px; }
svg { display: block; flex: none; }
em { font-style: normal; }
p, h1, h2 { margin: 0; }
.defs { position: absolute; }

.topbar { height: 27px; display: grid; grid-template-columns: 640px 640px 640px; font: 14.500px "Noto Sans", "Open Sans", sans-serif; letter-spacing: -.3px; color: #e6e6e6; line-height: 27px; }
.topbar > div { display: flex; align-items: center; white-space: nowrap; }
.tb-left { padding-left: 18px; }
.t-act { width: 98px; }
.t-app { margin-right: 7px; }
.tb-mid { padding: 0 0 1px 312px; gap: 19px; }
.tb-right { justify-content: flex-end; padding-right: 19px; }
.r1, .r2 { margin-right: 23px; }
.r3 { margin-right: 28px; }
.r4 { width: 16px; margin-right: 33px; }
.r5 { margin-right: 13px; }
.r6 { margin-right: 10px; }
.r7 { margin-right: 14px; }

.desktop { flex: 1; display: flex; min-height: 0; }
.dock { width: 62px; flex: none; background: linear-gradient(#2b2c2c, #262626 50%, #232323); padding-top: 4px; }
.app { position: relative; height: 60px; padding: 10px 0 0 11px; }
.app svg { width: 40px; height: 40px; }
.app.on::before { content: ""; position: absolute; left: 3px; top: 2px; width: 56px; height: 56px; border-radius: 10px; background: #4b4b4b; }
.app.on svg { position: relative; }
.dot { position: absolute; left: 3px; top: 28px; width: 5px; height: 5px; border-radius: 50%; background: #e95420; }
.dot.two { top: 24px; box-shadow: 0 8px #e95420; }
.dock-sep { height: 1px; margin: 1px 11px; background: #555; }
.badge { position: absolute; left: 19px; top: 4px; width: 38px; height: 20px; border-radius: 10px; background: #0a9535; text-align: center; font: 11px/20px "Noto Sans", sans-serif; box-shadow: 0 1px 2px #0008; }
.badge.one { left: 37px; top: 4px; width: 20px; }
.cut { padding: 11px 0 0 11px; }
.cut svg { width: 40px; height: 11px; }
.all { padding: 17px 0 0 18px; }
.all svg { width: 26px; height: 26px; }

.browser { flex: 1; display: flex; flex-direction: column; min-width: 0; }
.tabs { height: 34px; background: #003b40; display: flex; padding-left: 9px; font: 14.500px "Noto Sans", "Open Sans", sans-serif; letter-spacing: -.2px; color: #e3ebeb; }
.tab { position: relative; width: 108px; display: flex; align-items: center; padding: 0 0 1px 11px; flex: none; }
.tab.wide { width: 109px; }
.tab::after { content: ""; position: absolute; right: -1px; top: 7px; width: 1px; height: 19px; background: #4f7578; }
.tab.last::after, .tab.active::after { display: none; }
.tab.active { background: #005a5f; border-radius: 9px 9px 0 0; color: #fff; }
.fav { width: 16px; height: 16px; margin-right: 9px; }
.tab span { width: 43px; white-space: nowrap; mask-image: linear-gradient(90deg, #000 55%, #0003 98%); }
.tab:last-of-type span { mask-image: none; }
.close { width: 9px; height: 9px; margin-left: 10px; }
.newtab { width: 14px; height: 14px; margin: 10px 0 0 15px; }
.winctl { margin-left: auto; width: 127px; display: flex; align-items: center; }
.winctl svg + svg { margin-left: 26px; }
.winctl svg + svg ~ svg { margin-left: 20px; }

.toolbar { height: 41px; background: #005a5f; display: flex; align-items: center; padding: 1px 0 0 13px; }
.nav { width: 17px; height: 17px; margin-right: 15px; }
.dim { opacity: .45; }
.url { margin-left: -1px; width: 1578px; height: 34px; border-radius: 17px; background: #004549; display: flex; align-items: center; padding-left: 13px; }
.addr { margin-left: 11px; font: 14px "Noto Sans", "Open Sans", sans-serif; letter-spacing: -.16px; color: #8fabad; }
.addr em { color: #fff; letter-spacing: -.45px; }
.urlicons { margin-left: auto; padding-right: 10px; display: flex; gap: 16px; }
.urlicons svg { width: 16px; height: 16px; }
.urlicons .ustar { width: 18px; height: 18px; margin: -1px; color: #b9c4c5; }
.exts { display: flex; align-items: center; padding-left: 14px; gap: 16px; }
.exts svg { width: 16px; height: 16px; }
.me { width: 22px; height: 22px; margin: 0 -3px; border-radius: 50%; background: #512da8; text-align: center; font: 500 12px/22px Roboto, sans-serif; }
.exts .kebab { width: 18px; height: 18px; margin-left: -1px; }

.bookmarks { height: 34px; background: #005a5f; border-bottom: 1px solid #2d7f83; display: grid; grid-template-columns: 66px 145px 152px 149px 149px 147px 148px 99px 141px 146px 149px 186px 20px auto; padding: 0 0 5px 15px; align-items: center; font: 14.500px "Noto Sans", "Open Sans", sans-serif; letter-spacing: .18px; color: #f0f5f5; }
.bm { display: flex; align-items: center; gap: 8px; white-space: nowrap; }
.bm.tight { letter-spacing: -.25px; }
.bm.mid { letter-spacing: 0; }
.bm svg { width: 16px; height: 16px; }
.li { width: 14px; height: 14px; background: #0a66c2; font: 700 11px/14px "Open Sans", sans-serif; text-align: center; border-radius: 1px; margin: 0 1px; }
.bm-more { font-size: 18px; }
.all-bm { border-left: 1px solid #4a8386; padding-left: 9px; }

.gmail { flex: 1; display: flex; flex-direction: column; background: #1a1a1a; }
.ghead { height: 65px; display: flex; align-items: center; padding: 0 18px 2px 27px; }
.glogo { margin-left: 20px; }
.gname { margin-left: 11px; width: 150px; font-size: 22px; color: #e4e4e4; }
.search { width: 720px; height: 48px; border-radius: 24px; background: #4a4a4a; display: flex; align-items: center; padding: 0 16px 0 12px; font-size: 16px; color: #ddd; }
.search span { margin-left: 8px; flex: 1; }
.hicons { margin-left: auto; display: flex; align-items: center; gap: 20px; }
.hicons svg { width: 24px; height: 24px; }
.hicons .gapps { width: 18px; height: 18px; margin: 3px; color: #e8e8e8; }
.avatar-me { width: 32px; height: 32px; border-radius: 50%; background: #512da8; text-align: center; font: 500 18px/33px Roboto, sans-serif; }

.gbody { flex: 1; display: flex; }
.side { width: 256px; flex: none; }
.compose { margin: 7px 0 0 8px; width: 142px; height: 56px; border-radius: 16px; background: #fff; display: flex; align-items: center; padding-left: 18px; gap: 18px; color: #5f6368; font-weight: 500; letter-spacing: .32px; }
.row { width: 240px; height: 32px; display: flex; align-items: center; padding: 0 12px 0 26px; color: #f0f0f0; letter-spacing: .12px; }
.compose + .row { margin-top: 16px; }
.row svg { width: 20px; height: 20px; color: #b5b5b5; margin-right: 18px; }
.row span { flex: 1; }
.row em { font-size: 12px; letter-spacing: -.4px; }
.row em.n { font-weight: 400; }
.sel { background: #5b5b5b; border-radius: 0 16px 16px 0; color: #fff; }
.sel, .bold { font-weight: 700; letter-spacing: .45px; }
.lhead { display: flex; justify-content: space-between; align-items: center; margin: 25px 0 11px; padding: 0 11px 0 26px; width: 240px; height: 24px; font-size: 16px; font-weight: 500; color: #eee; letter-spacing: .3px; }
.lhead svg { width: 14px; height: 14px; }

.panel { width: 1546px; height: 864px; margin-top: -1px; border-radius: 16px; background: #303030; flex: none; }
.mbar { height: 48px; display: flex; align-items: center; padding-left: 16px; color: #bdbdbd; }
.i { width: 20px; height: 20px; margin-right: 24px; }
.i0 { width: 18px; height: 18px; margin: 0 37px 0 1px; }
.vs { width: 1px; height: 20px; margin: 0 20px 0 -5px; background: #5a5a5a; }
.kb { width: 18px; margin-left: -3px; }
.pager { margin-left: auto; padding-right: 38px; display: flex; align-items: center; font-size: 12px; letter-spacing: -.35px; }
.pager svg { margin-left: 20px; }
.pager svg:last-child { margin-left: 18px; }
.mail { width: 1530px; height: 522px; background: #fff; color: #222; }
.subj { display: flex; align-items: center; height: 68px; padding: 0 16px 0 72px; }
h1 { font-size: 22px; font-weight: 400; width: 60px; padding-bottom: 2px; }
.chip { display: flex; align-items: center; gap: 6px; height: 18px; background: #ddd; border-radius: 4px; padding: 0 5px 0 4px; width: 51px; font-size: 12px; color: #666; }
.chip svg { width: 7px; height: 7px; }
.subj > svg { width: 20px; height: 20px; }
.print { margin: 0 16px 0 auto; }
.from { display: flex; padding: 8px 16px 0; height: 64px; }
.warn { width: 40px; height: 40px; border-radius: 50%; background: #ffb33f; display: grid; place-items: center; }
.who { margin: -1px 0 0 16px; font-size: 12px; line-height: 20px; color: #5f5f5f; }
.who b { font-size: 14.500px; color: #222; letter-spacing: .16px; }
.who u { color: #222; }
.to { display: flex; align-items: center; gap: 6px; }
.meta { margin-left: auto; display: flex; align-items: center; height: 20px; font-size: 12px; color: #5f5f5f; letter-spacing: -.06px; }
.meta svg { width: 20px; height: 20px; color: #444; margin-left: 20px; }
.banner { margin-left: 24px; width: 1490px; height: 152px; border-radius: 8px; background: #ffbc42; padding: 18px 24px; }
h2 { font-size: 16px; font-weight: 500; line-height: 24px; letter-spacing: .36px; }
.banner p { font-size: 14px; line-height: 18px; margin-top: 6px; white-space: nowrap; letter-spacing: .134px; }
.banner .l2 { letter-spacing: .17px; }
.acts { display: flex; align-items: center; margin-top: 16px; }
button { background: none; border: 0; padding: 0; font: 500 14px Roboto, sans-serif; letter-spacing: .3px; color: #222; }
.spam { width: 116px; height: 36px; border: 1px solid #222; border-radius: 4px; margin-right: 32px; }
.acts svg { margin-left: auto; margin-right: 2px; }
.text { font: 13px/18px "Liberation Sans", Arial, sans-serif; margin: 17px 0 0 72px; }
.replies { display: flex; gap: 8px; margin: 58px 0 0 72px; }
.replies button { height: 36px; border: 1px solid #747775; border-radius: 18px; display: flex; align-items: center; color: #444746; padding-left: 18px; }
.replies svg { width: 18px; height: 18px; margin-right: 9px; }
.rp { width: 104px; }
.fw { width: 112px; }
.fw svg { transform: scaleX(-1); }
.replies .fw { padding-left: 13px; letter-spacing: .4px; }

.rail { width: 56px; display: flex; flex-direction: column; align-items: center; padding-top: 17px; gap: 36px; }
.rail svg { width: 20px; height: 20px; }
.rail hr { width: 20px; height: 1px; border: 0; margin: -2px 0 1px; background: #444; flex: none; }
.rail .rplus { width: 14px; height: 14px; }
.rail .rchev { margin: auto 0 18px; }

.toast { position: absolute; left: 86px; top: 1004px; width: 467px; height: 52px; background: #fff; border-radius: 4px; display: flex; align-items: center; padding-left: 24px; color: #5f6368; letter-spacing: .09px; box-shadow: 0 2px 8px #0006; }
.toast a { color: #0b6fe8; font-weight: 500; margin-left: 24px; letter-spacing: .4px; }
.toast svg { width: 12px; height: 12px; margin-left: 28px; }
```
